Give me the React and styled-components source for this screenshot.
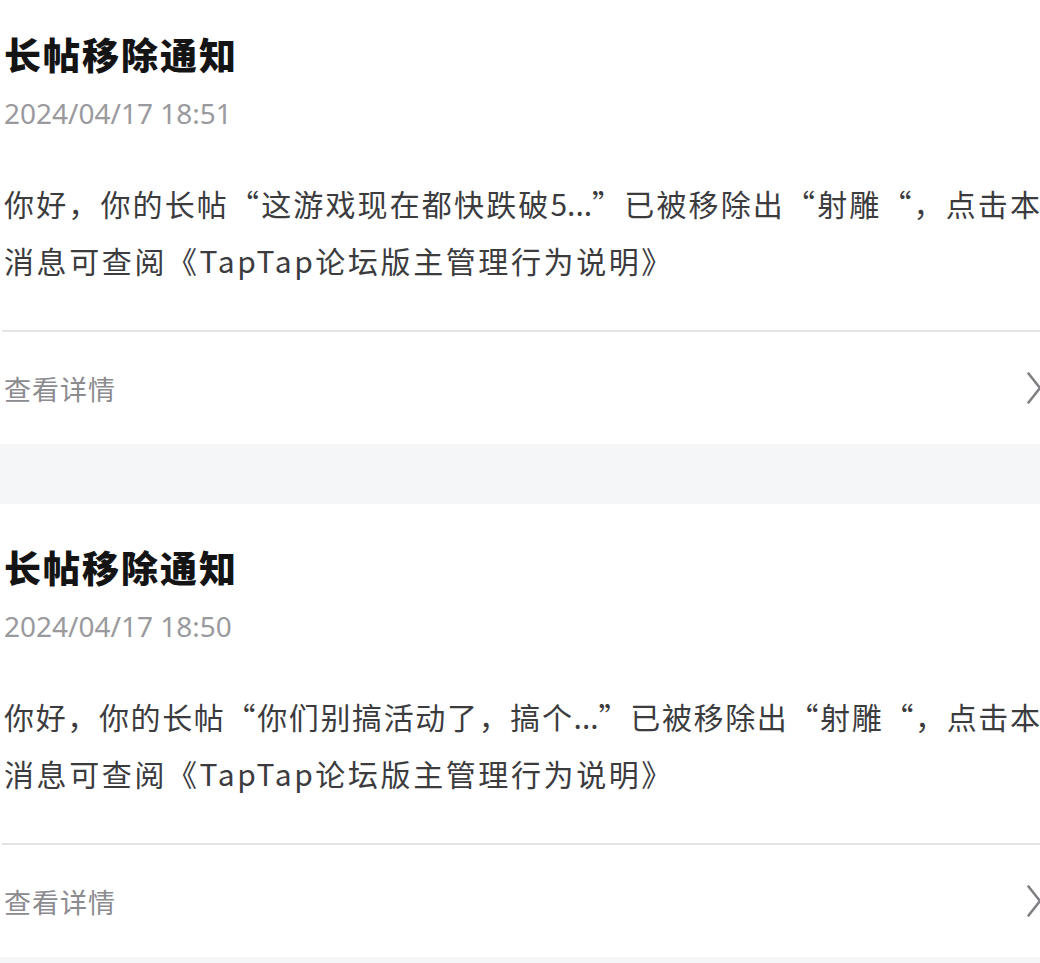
import React from "react";
import styled, { createGlobalStyle } from "styled-components";

const Global = createGlobalStyle`
  html, body {
    margin: 0;
    padding: 0;
    background: #f5f6f8;
    overflow: hidden;
  }
  body {
    font-family: "Noto Sans", "Noto Sans CJK SC", sans-serif;
  }
`;

const Page = styled.div`
  display: flex;
  flex-direction: column;
  gap: 60px;
  width: 1040px;
  min-height: 963px;
  margin-top: -9px;
  background: #f5f6f8;
`;

const Card = styled.section`
  display: flex;
  flex-direction: column;
  background: #ffffff;
  padding: 40px 0 0 4px;
`;

const Title = styled.h2`
  margin: 0;
  font-family: "Noto Sans CJK SC", sans-serif;
  font-weight: 900;
  font-size: 37px;
  line-height: 46px;
  color: #141414;
  letter-spacing: 2px;
`;

const Time = styled.div`
  margin-top: 18px;
  font-family: "Noto Sans", "Noto Sans CJK SC", sans-serif;
  font-size: 28px;
  line-height: 36px;
  color: #9a9a9e;
`;

const Body = styled.div`
  margin-top: 44px;
  font-family: "Noto Sans CJK SC", sans-serif;
  font-size: 30px;
  line-height: 57px;
  color: #3c3c3f;
`;

const Line = styled.div`
  text-align: left;
  text-align-last: ${(p) => (p.$justify ? "justify" : "left")};
  letter-spacing: ${(p) => (p.$justify ? "0" : "2.6px")};
`;

const Divider = styled.hr`
  margin: 41px 0 0 -2px;
  border: 0;
  height: 2px;
  background: #e4e4e6;
`;

const Footer = styled.div`
  display: flex;
  align-items: center;
  justify-content: space-between;
  height: 112px;
`;

const More = styled.span`
  font-family: "Noto Sans CJK SC", sans-serif;
  font-size: 27px;
  color: #8b8b90;
  letter-spacing: 1px;
`;

const Chevron = styled.svg`
  width: 14px;
  height: 32px;
  margin-right: -1px;
  flex: none;
`;

const notices = [
  {
    time: "2024/04/17 18:51",
    first: "你好，你的长帖“这游戏现在都快跌破5...”已被移除出“射雕“，点击本",
  },
  {
    time: "2024/04/17 18:50",
    first: "你好，你的长帖“你们别搞活动了，搞个...”已被移除出“射雕“，点击本",
  },
];

function Notice({ time, first }) {
  return (
    <Card>
      <Title>长帖移除通知</Title>
      <Time>{time}</Time>
      <Body lang="zh-CN">
        <Line $justify>{first}</Line>
        <Line>消息可查阅《TapTap论坛版主管理行为说明》</Line>
      </Body>
      <Divider />
      <Footer>
        <More>查看详情</More>
        <Chevron viewBox="0 0 14 32" fill="none">
          <path
            d="M1.5 1.5 L13 16 L1.5 30.5"
            stroke="#808084"
            strokeWidth="2.6"
            strokeLinecap="round"
            strokeLinejoin="round"
          />
        </Chevron>
      </Footer>
    </Card>
  );
}

export default function App() {
  return (
    <>
      <Global />
      <Page>
        {notices.map((n) => (
          <Notice key={n.time} {...n} />
        ))}
      </Page>
    </>
  );
}
